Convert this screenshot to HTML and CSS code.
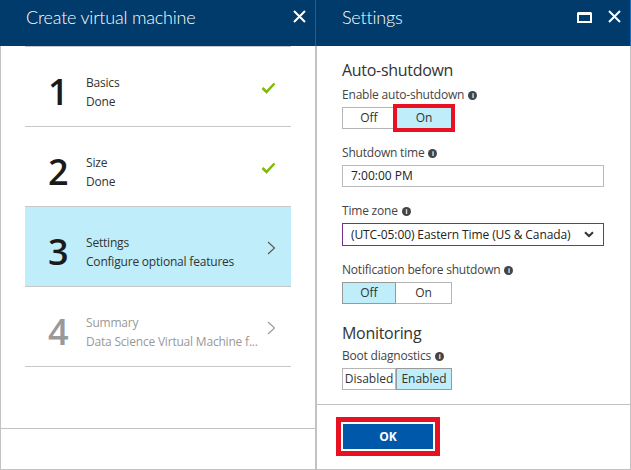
FILE: index.html
```html
<!DOCTYPE html>
<html lang="en">
<head>
<meta charset="utf-8">
<title>Create virtual machine</title>
<link rel="stylesheet" href="styles.css">
</head>
<body>
<div class="blades">
  <section class="blade blade-wizard">
    <header class="blade-header wizard-header">
      <h1 class="blade-title">Create virtual machine</h1>
      <div class="blade-actions">
        <span class="icon-btn close-btn" aria-label="Close">
          <svg width="13" height="13" viewBox="0 0 13 13"><path d="M1 1 L12 12 M12 1 L1 12" stroke="#fff" stroke-width="2" fill="none"/></svg>
        </span>
      </div>
    </header>
    <div class="blade-body wizard-body">
      <ol class="steps">
        <li class="step">
          <span class="step-num">1</span>
          <span class="step-text"><span class="step-name">Basics</span><span class="step-desc">Done</span></span>
          <svg class="step-icon check" width="15" height="12" viewBox="0 0 15 12"><path d="M1.5 6 L5.5 10 L13.5 1.5" stroke="#7fba00" stroke-width="2.5" fill="none"/></svg>
        </li>
        <li class="step">
          <span class="step-num">2</span>
          <span class="step-text"><span class="step-name">Size</span><span class="step-desc">Done</span></span>
          <svg class="step-icon check" width="15" height="12" viewBox="0 0 15 12"><path d="M1.5 6 L5.5 10 L13.5 1.5" stroke="#7fba00" stroke-width="2.5" fill="none"/></svg>
        </li>
        <li class="step active">
          <span class="step-num">3</span>
          <span class="step-text"><span class="step-name">Settings</span><span class="step-desc">Configure optional features</span></span>
          <svg class="step-icon chevron" width="9" height="14" viewBox="0 0 9 14"><path d="M1 1 L7.5 7 L1 13" stroke="#555" stroke-width="1.1" fill="none"/></svg>
        </li>
        <li class="step disabled">
          <span class="step-num">4</span>
          <span class="step-text"><span class="step-name">Summary</span><span class="step-desc">Data Science Virtual Machine f...</span></span>
          <svg class="step-icon chevron" width="9" height="14" viewBox="0 0 9 14"><path d="M1 1 L7.5 7 L1 13" stroke="#999" stroke-width="1.1" fill="none"/></svg>
        </li>
      </ol>
    </div>
    <footer class="blade-footer wizard-footer"></footer>
  </section>

  <section class="blade blade-settings">
    <header class="blade-header settings-header">
      <h1 class="blade-title">Settings</h1>
      <div class="blade-actions">
        <span class="icon-btn max-btn" aria-label="Maximize">
          <svg width="15" height="11" viewBox="0 0 15 11"><rect x="1" y="1.5" width="13" height="8.5" stroke="#fff" stroke-width="2" fill="none"/><rect x="1" y="0" width="13" height="3" fill="#fff"/></svg>
        </span>
        <span class="icon-btn close-btn" aria-label="Close">
          <svg width="13" height="13" viewBox="0 0 13 13"><path d="M1 1 L12 12 M12 1 L1 12" stroke="#fff" stroke-width="2" fill="none"/></svg>
        </span>
      </div>
    </header>
    <div class="blade-body settings-body">
      <h2 class="section-title">Auto-shutdown</h2>
      <div class="field">
        <div class="field-label">Enable auto-shutdown <span class="info">i</span></div>
        <div class="toggle">
          <span class="toggle-opt">Off</span>
          <span class="toggle-opt selected highlighted">On</span>
        </div>
      </div>
      <div class="field">
        <div class="field-label">Shutdown time <span class="info">i</span></div>
        <div class="textbox">7:00:00 PM</div>
      </div>
      <div class="field">
        <div class="field-label">Time zone <span class="info">i</span></div>
        <div class="dropdown">
          <span class="dropdown-value">(UTC-05:00) Eastern Time (US &amp; Canada)</span>
          <svg width="10" height="7" viewBox="0 0 10 7"><path d="M1 1.2 L5 5 L9 1.2" stroke="#333" stroke-width="2" fill="none"/></svg>
        </div>
      </div>
      <div class="field">
        <div class="field-label">Notification before shutdown <span class="info">i</span></div>
        <div class="toggle">
          <span class="toggle-opt selected">Off</span>
          <span class="toggle-opt">On</span>
        </div>
      </div>
      <h2 class="section-title monitoring">Monitoring</h2>
      <div class="field field-boot">
        <div class="field-label">Boot diagnostics <span class="info">i</span></div>
        <div class="toggle">
          <span class="toggle-opt">Disabled</span>
          <span class="toggle-opt selected">Enabled</span>
        </div>
      </div>
    </div>
    <footer class="blade-footer settings-footer">
      <span class="ok-btn">OK</span>
    </footer>
  </section>
</div>
</body>
</html>
```

FILE: styles.css
```css
html, body {
  margin: 0;
  padding: 0;
  background: #fff;
}
body {
  font-family: "Open Sans", "Noto Sans", "Liberation Sans", sans-serif;
  color: #333;
  width: 631px;
  height: 470px;
  overflow: hidden;
}
.blades {
  display: flex;
  height: 470px;
}
.blade {
  display: flex;
  flex-direction: column;
  box-sizing: border-box;
}
.blade-wizard { width: 316px; }
.blade-settings { width: 315px; }

.blade-header {
  height: 46px;
  flex: none;
  box-sizing: border-box;
  background: #003b6b;
  color: #fff;
  display: flex;
  justify-content: space-between;
  align-items: flex-start;
}
.wizard-header { border-right: 1px solid #2a5c88; }
.settings-header { border-right: 1px solid #1e6bb8; }
.blade-title {
  margin: 0;
  font-family: Lato, "Open Sans", sans-serif;
  font-size: 18px;
  font-weight: 300;
  line-height: 22px;
  padding: 6px 0 0 26px;
  letter-spacing: -0.2px;
}
.blade-actions {
  display: flex;
  align-items: center;
  gap: 16px;
  padding: 10px 9px 0 0;
}
.icon-btn { display: flex; }
.max-btn { margin-top: 1px; }

.blade-body {
  flex: 1;
  border-left: 1px solid #c2c2c2;
  border-right: 1px solid #c2c2c2;
}
.blade-footer {
  flex: none;
  box-sizing: border-box;
  border: 1px solid #c2c2c2;
}
.wizard-footer { height: 42px; }
.settings-footer {
  height: 66px;
  padding: 19px 0 0 25px;
}

/* steps */
.steps {
  list-style: none;
  margin: 0 24px;
  padding: 0;
}
.step {
  height: 80px;
  box-sizing: border-box;
  border-top: 1px solid #c8c8c8;
  display: flex;
  align-items: center;
  padding-top: 10px;
}
.step:last-child { border-bottom: 1px solid #c8c8c8; height: 81px; }
.step.active { background: #bfedfa; }
.step-num {
  width: 38px;
  margin-left: 23px;
  font-size: 36px;
  font-weight: 600;
  line-height: 40px;
  color: #1a1a1a;
}
.step-text {
  flex: 1;
  display: flex;
  flex-direction: column;
  font-size: 12px;
  line-height: 19px;
  color: #333;
  letter-spacing: -0.2px;
}
.step-icon {
  margin-right: 15px;
  margin-bottom: 8px;
}
.step.disabled .step-num { color: #999; }
.step.disabled .step-text { color: #999; }

/* settings form */
.settings-body {
  padding: 13px 25px 0 25px;
}
.section-title {
  margin: 0;
  font-size: 16px;
  font-weight: 400;
  line-height: 22px;
  color: #333;
  letter-spacing: -0.3px;
}
.section-title.monitoring { margin-top: 18px; }
.field-label {
  font-size: 12px;
  line-height: 18px;
  color: #444;
  margin-bottom: 3px;
  display: flex;
  align-items: center;
  gap: 4px;
  letter-spacing: -0.2px;
}
.section-title + .field .field-label { margin-top: 5px; }
.section-title + .field-boot .field-label { margin-top: 3px; }
.field + .field { margin-top: 15px; }
.info {
  width: 9px;
  height: 9px;
  border-radius: 50%;
  background: #444;
  color: #fff;
  font-size: 7px;
  font-weight: 700;
  line-height: 9px;
  text-align: center;
  font-family: "Liberation Sans", sans-serif;
}
.toggle {
  display: flex;
}
.toggle-opt {
  width: 54px;
  height: 22px;
  box-sizing: border-box;
  border: 1px solid #b5b5b5;
  font-size: 12px;
  line-height: 20px;
  text-align: center;
  color: #333;
  background: #fff;
}
.toggle-opt + .toggle-opt { border-left: none; width: 56px; }
.toggle-opt.selected { background: #bfedfa; border-color: #999; }
.toggle-opt + .toggle-opt.selected { border-left: 1px solid #999; }
.toggle-opt.selected + .toggle-opt { border-left: none; }
.toggle-opt.highlighted {
  outline: 4px solid #e81123;
  outline-offset: -1px;
}
.textbox {
  height: 22px;
  box-sizing: border-box;
  width: 262px;
  border: 1px solid #bbb;
  padding-left: 8px;
  font-size: 12px;
  line-height: 20px;
  color: #222;
}
.dropdown {
  height: 23px;
  box-sizing: border-box;
  width: 262px;
  border: 1px solid #7a2e8e;
  padding: 0 9px 0 8px;
  display: flex;
  align-items: center;
  justify-content: space-between;
  font-size: 12px;
  color: #222;
  letter-spacing: -0.1px;
}

/* OK button */
.ok-btn {
  display: inline-block;
  width: 90px;
  height: 25px;
  margin-left: 1px;
  background: #0058ab;
  color: #fff;
  font-size: 12px;
  font-weight: 700;
  line-height: 25px;
  text-align: center;
  box-shadow: 0 0 0 2px #fff, 0 0 0 7px #e81123;
}
```
